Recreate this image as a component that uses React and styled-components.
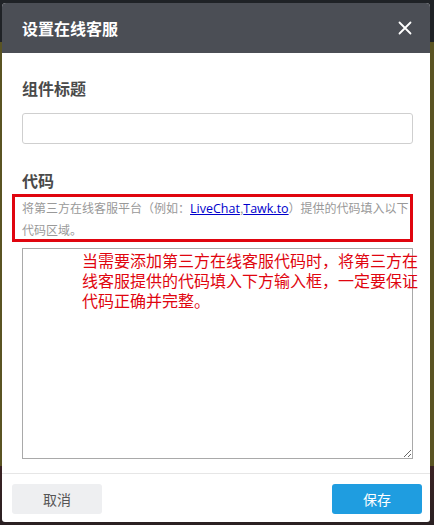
import React from "react";
import styled, { createGlobalStyle } from "styled-components";

const Global = createGlobalStyle`
  html, body { margin: 0; padding: 0; }
  body {
    width: 434px;
    height: 525px;
    overflow: hidden;
    font-family: "Noto Sans CJK SC", "Noto Sans", sans-serif;
    background: linear-gradient(to bottom, #1f2226 0, #1f2226 42px, #5a5423 42px, #5a5423 466px, #3b2324 466px, #2a2022 525px);
  }
  #root { padding: 3px 4px 0 2px; }
`;

const Modal = styled.div`
  width: 428px;
  height: 519px;
  background: #fff;
  border-radius: 4px 4px 3px 3px;
  display: flex;
  flex-direction: column;
  overflow: hidden;
`;

const Header = styled.div`
  height: 50px;
  flex: none;
  background: #4b4e55;
  display: flex;
  align-items: center;
  justify-content: space-between;
  padding: 0 18px 0 20px;
  box-sizing: border-box;
`;

const Title = styled.div`
  color: #fff;
  font-size: 16px;
  font-weight: 700;
  line-height: 24px;
`;

const Close = styled.button`
  border: 0;
  background: none;
  padding: 0;
  width: 14px;
  height: 14px;
  display: flex;
  cursor: pointer;
`;

const Body = styled.div`
  flex: 1;
  padding: 23px 17px 14px 20px;
  display: flex;
  flex-direction: column;
  box-sizing: border-box;
`;

const Label = styled.div`
  font-size: 16px;
  font-weight: 700;
  color: #4a4a4a;
  line-height: 24px;
  margin-top: ${(p) => p.$mt || 0}px;
`;

const Input = styled.input`
  margin-top: 13px;
  height: 31px;
  box-sizing: border-box;
  border: 1px solid #cfcfcf;
  border-radius: 3px;
  padding: 0 8px;
  font-size: 14px;
  outline: none;
`;

const HelpBox = styled.div`
  margin: 2px 0 0 -10px;
  border: 3px solid #e0050f;
  padding: 1px 0 0 7px;
  height: 41px;
  box-sizing: content-box;
  font-size: 12px;
  line-height: 20.5px;
  color: #999;
`;

const Punct = styled.span`
  display: inline-block;
  width: 12px;
  text-align: center;
`;

const Link = styled.a`
  color: #0000cc;
  text-decoration: underline;
  font-family: "Open Sans", "Noto Sans", sans-serif;
  font-size: 12.5px;
`;

const AreaWrap = styled.div`
  position: relative;
  margin-top: 6px;
  display: flex;
`;

const Area = styled.textarea`
  flex: 1;
  height: 211px;
  box-sizing: border-box;
  border: 1px solid #a9a9a9;
  border-radius: 0;
  margin: 0;
  padding: 4px;
  resize: both;
  outline: none;
`;

const Note = styled.div`
  position: absolute;
  left: 60px;
  top: 2px;
  width: 340px;
  font-size: 16px;
  line-height: 20px;
  color: #e0050f;
  pointer-events: none;
`;

const Footer = styled.div`
  flex: none;
  border-top: 1px solid #e6e6e6;
  padding: 10px 8px 9px 10px;
  display: flex;
  justify-content: space-between;
`;

const Btn = styled.button`
  width: 90px;
  height: 30px;
  border: 0;
  border-radius: 3px;
  font-family: "Noto Sans CJK SC", sans-serif;
  font-size: 14px;
  background: ${(p) => (p.$primary ? "#1f9de0" : "#eeeff1")};
  color: ${(p) => (p.$primary ? "#fff" : "#555")};
  cursor: pointer;
`;

export default function App() {
  return (
    <>
      <Global />
      <Modal>
        <Header>
          <Title>设置在线客服</Title>
          <Close aria-label="关闭">
            <svg width="14" height="14" viewBox="0 0 14 14">
              <path d="M1.5 1.5 L12.5 12.5 M12.5 1.5 L1.5 12.5" stroke="#fff" strokeWidth="1.8" strokeLinecap="round" />
            </svg>
          </Close>
        </Header>
        <Body>
          <Label>组件标题</Label>
          <Input />
          <Label $mt={24}>代码</Label>
          <HelpBox>
            将第三方在线客服平台<Punct>（</Punct>例如<Punct>：</Punct><Link href="#">LiveChat</Link>,<Link href="#">Tawk.to</Link><Punct>）</Punct>提供的代码填入以下代码区域。
          </HelpBox>
          <AreaWrap>
            <Area />
            <Note>当需要添加第三方在线客服代码时，将第三方在线客服提供的代码填入下方输入框，一定要保证代码正确并完整。</Note>
          </AreaWrap>
        </Body>
        <Footer>
          <Btn>取消</Btn>
          <Btn $primary>保存</Btn>
        </Footer>
      </Modal>
    </>
  );
}
